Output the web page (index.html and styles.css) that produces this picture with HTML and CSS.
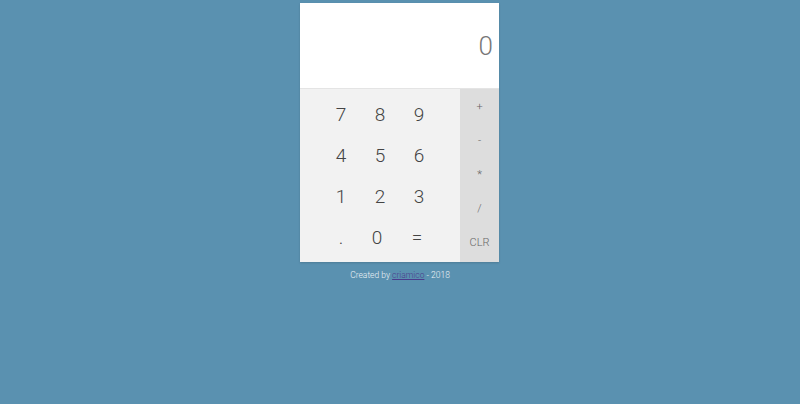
FILE: index.html
```html
<!DOCTYPE html>
<html>
<head>
<meta charset="utf-8">
<link rel="stylesheet" href="styles.css">
</head>
<body>
<div class="calc">
  <div class="display">0</div>
  <div class="keypad">
    <div class="numbers">
      <span class="key">7</span><span class="key">8</span><span class="key">9</span>
      <span class="key">4</span><span class="key">5</span><span class="key">6</span>
      <span class="key">1</span><span class="key">2</span><span class="key">3</span>
      <span class="key">.</span><span class="key zero">0</span><span class="key eq">=</span>
    </div>
    <div class="ops">
      <span class="op">+</span>
      <span class="op">-</span>
      <span class="op">*</span>
      <span class="op">/</span>
      <span class="op">CLR</span>
    </div>
  </div>
</div>
<p class="footer">Created by <a href="#">criamico</a> - 2018</p>
</body>
</html>
```
FILE: styles.css
```css
html, body {
  margin: 0;
  padding: 0;
  background: #5a91b0;
  font-family: Roboto, "Noto Sans", sans-serif;
}
.calc {
  width: 199px;
  margin: 3px 0 0 300px;
  margin-left: calc(50% - 100px);
  box-shadow: 0 1px 2px rgba(0,0,0,0.15);
}
.display {
  height: 85px;
  background: #fff;
  border-bottom: 1px solid #e4e4e4;
  display: flex;
  align-items: center;
  justify-content: flex-end;
  padding-right: 6px;
  font-size: 26px;
  font-weight: 300;
  color: #777;
  line-height: 1;
}
.keypad {
  display: flex;
  height: 173px;
}
.numbers {
  width: 160px;
  background: #f2f2f2;
  display: grid;
  grid-template-columns: repeat(3, 39px);
  grid-auto-rows: 41px;
  justify-content: center;
  padding-top: 5px;
  box-sizing: border-box;
}
.key {
  display: flex;
  align-items: center;
  justify-content: center;
  font-size: 19px;
  font-weight: 300;
  color: #444;
}
.zero { transform: translateX(-3px); }
.eq { transform: translateX(-2px); }
.ops {
  width: 39px;
  background: #dddddd;
  display: grid;
  grid-auto-rows: 34px;
  align-content: start;
}
.op {
  display: flex;
  align-items: center;
  justify-content: center;
  font-size: 11px;
  font-weight: 300;
  color: #666;
}
.footer {
  margin: 8px 0 0;
  text-align: center;
  font-size: 8.5px;
  font-weight: 300;
  color: #eef3f7;
}
.footer a {
  color: #4a3c8c;
}
```
